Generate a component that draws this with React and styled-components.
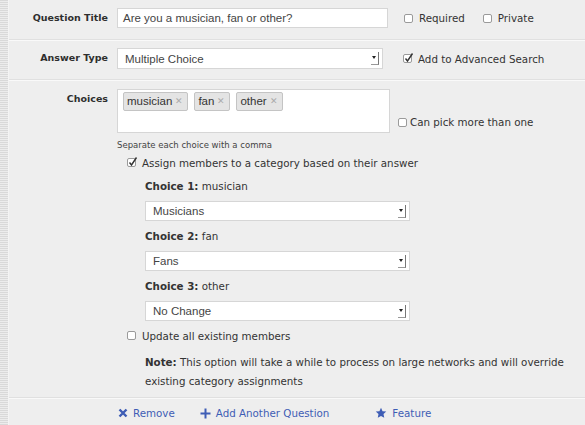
import React from 'react';
import styled, { createGlobalStyle } from 'styled-components';

const GlobalStyle = createGlobalStyle`
  html, body {
    margin: 0;
    padding: 0;
    background: #eeeeee;
  }
  body {
    font-family: "DejaVu Sans", Verdana, sans-serif;
    color: #333;
  }
`;

const Page = styled.div`
  display: flex;
  width: 585px;
  height: 425px;
  overflow: hidden;
`;

const Strip = styled.div`
  width: 8px;
  flex: none;
  background: repeating-linear-gradient(
    to bottom,
    #d9d9d9 0px,
    #d9d9d9 1px,
    #ececec 1px,
    #ececec 2px
  );
  border-right: 1px solid #f4f4f4;
`;

const Content = styled.div`
  flex: 1;
  display: flex;
  flex-direction: column;
`;

const Row = styled.div`
  display: grid;
  grid-template-columns: 99px 1fr;
  align-items: start;
  column-gap: 9px;
  padding: ${(p) => p.$pad || '8px 0 0'};
  height: ${(p) => p.$h};
  box-sizing: border-box;
  border-bottom: 1px solid #e0e0e0;
  box-shadow: 0 1px 0 #f9f9f9;
`;

const Label = styled.div`
  font-weight: bold;
  font-size: 9.5px;
  text-align: right;
  color: #2e2e2e;
  line-height: 20px;
`;

const Line = styled.div`
  display: flex;
  align-items: ${(p) => p.$align || 'center'};
`;

const TextInput = styled.div`
  width: 271px;
  height: 20px;
  box-sizing: border-box;
  background: #fff;
  border: 1px solid #d6d6d6;
  font-family: "Liberation Sans", Arial, sans-serif;
  font-size: 11.5px;
  color: #444;
  line-height: 18px;
  padding-left: 5px;
`;

const Select = styled.div`
  width: ${(p) => p.$w}px;
  height: ${(p) => p.$h || 20}px;
  box-sizing: border-box;
  background: #fff;
  border: 1px solid #d6d6d6;
  font-family: "Liberation Sans", Arial, sans-serif;
  font-size: 11.5px;
  color: #444;
  display: flex;
  align-items: center;
  justify-content: space-between;
  padding: 0 3px 0 7px;
`;

const Arrow = styled.span`
  width: 8px;
  height: 13px;
  box-sizing: border-box;
  border-right: 1px solid #777;
  border-bottom: 1px solid #999;
  position: relative;
  &::after {
    content: '';
    position: absolute;
    left: 1px;
    top: 4px;
    border-left: 2.5px solid transparent;
    border-right: 2.5px solid transparent;
    border-top: 3px solid #222;
  }
`;

const Check = styled.span`
  display: inline-flex;
  align-items: center;
  gap: ${(p) => p.$gap || 6}px;
  font-size: 10.3px;
  color: #333;
  margin-left: ${(p) => p.$ml || 0}px;
  margin-bottom: ${(p) => p.$mb || 0}px;
  white-space: nowrap;
`;

const Box = styled.span`
  width: 9px;
  height: 9px;
  box-sizing: border-box;
  border: 1px solid #9a9a9a;
  border-radius: 2px;
  background: #fff;
  position: relative;
  flex: none;
  svg {
    position: absolute;
    left: 0px;
    top: -3px;
  }
`;

const TagBox = styled.div`
  width: 273px;
  height: 44px;
  box-sizing: border-box;
  background: #fff;
  border: 1px solid #d6d6d6;
  padding: 2px 5px;
  display: flex;
  align-items: flex-start;
  gap: 6px;
`;

const Tag = styled.span`
  height: 19px;
  box-sizing: border-box;
  background: #e4e4e4;
  border: 1px solid #c4c4c4;
  border-radius: 2px;
  font-family: "Liberation Sans", Arial, sans-serif;
  font-size: 11.5px;
  color: #333;
  line-height: 17px;
  padding: 0 4px 0 3px;
  display: inline-flex;
  gap: 3px;
  span {
    color: #aaa;
    font-size: 9px;
  }
`;

const Hint = styled.div`
  font-size: 8.5px;
  color: #444;
  margin-top: 6px;
  line-height: 12px;
`;

const Indent = styled.div`
  padding-left: ${(p) => p.$pl}px;
  margin-top: ${(p) => p.$mt || 0}px;
`;

const ChoiceLabel = styled.div`
  font-size: 10.3px;
  line-height: 14px;
  margin: 8px 0 8px;
  b {
    font-weight: bold;
  }
`;

const Note = styled.div`
  font-size: 10.3px;
  line-height: 19px;
  color: #333;
  b {
    font-weight: bold;
  }
`;

const Footer = styled.div`
  display: flex;
  align-items: center;
  padding: 4px 0 0 109px;
  height: 26px;
  box-sizing: border-box;
`;

const Link = styled.a`
  display: inline-flex;
  align-items: center;
  gap: 5px;
  color: #3e5db5;
  font-size: 10.3px;
  text-decoration: none;
  margin-right: ${(p) => p.$mr}px;
`;

function CheckBox({ checked, label, ml, mb, gap }) {
  return (
    <Check $ml={ml} $mb={mb} $gap={gap}>
      <Box>
        {checked && (
          <svg width="10" height="11" viewBox="0 0 10 11">
            <path d="M1.5 6.5 L3.5 9 L8.5 1.5" fill="none" stroke="#333" strokeWidth="1.4" />
          </svg>
        )}
      </Box>
      {label}
    </Check>
  );
}

function Dropdown({ value, w, h }) {
  return (
    <Select $w={w} $h={h}>
      {value}
      <Arrow />
    </Select>
  );
}

const choices = [
  { n: 1, name: 'musician', cat: 'Musicians' },
  { n: 2, name: 'fan', cat: 'Fans' },
  { n: 3, name: 'other', cat: 'No Change' },
];

export default function App() {
  return (
    <>
      <GlobalStyle />
      <Page>
        <Strip />
        <Content>
          <Row $h="40px">
            <Label>Question Title</Label>
            <Line>
              <TextInput>Are you a musician, fan or other?</TextInput>
              <CheckBox label="Required" ml={16} />
              <CheckBox label="Private" ml={18} />
            </Line>
          </Row>
          <Row $h="40px">
            <Label>Answer Type</Label>
            <Line>
              <Dropdown value="Multiple Choice" w={266} h={21} />
              <CheckBox checked label="Add to Advanced Search" ml={20} />
            </Line>
          </Row>
          <Row $h="318px" $pad="9px 0 0">
            <Label>Choices</Label>
            <div>
              <Line $align="flex-end">
                <TagBox>
                  {['musician', 'fan', 'other'].map((t) => (
                    <Tag key={t}>
                      {t}
                      <span>✕</span>
                    </Tag>
                  ))}
                </TagBox>
                <CheckBox label="Can pick more than one" ml={8} mb={5} gap={3} />
              </Line>
              <Hint>Separate each choice with a comma</Hint>
              <Indent $pl={10} $mt={1}>
                <CheckBox checked label="Assign members to a category based on their answer" />
              </Indent>
              <Indent $pl={28} $mt={5}>
                {choices.map((c) => (
                  <div key={c.n}>
                    <ChoiceLabel>
                      <b>Choice {c.n}:</b> {c.name}
                    </ChoiceLabel>
                    <Dropdown value={c.cat} w={265} />
                  </div>
                ))}
              </Indent>
              <Indent $pl={10} $mt={4}>
                <CheckBox label="Update all existing members" />
              </Indent>
              <Indent $pl={28} $mt={9}>
                <Note>
                  <b>Note:</b> This option will take a while to process on large networks and will override
                  <br />
                  existing category assignments
                </Note>
              </Indent>
            </div>
          </Row>
          <Footer>
            <Link $mr={25}>
              <svg width="10" height="10" viewBox="0 0 10 10">
                <path d="M1.5 1.5 L8.5 8.5 M8.5 1.5 L1.5 8.5" stroke="#3e5db5" strokeWidth="2.4" />
              </svg>
              Remove
            </Link>
            <Link $mr={46}>
              <svg width="11" height="11" viewBox="0 0 11 11">
                <path d="M5.5 0.5 V10.5 M0.5 5.5 H10.5" stroke="#3e5db5" strokeWidth="2" />
              </svg>
              Add Another Question
            </Link>
            <Link $mr={0}>
              <svg width="12" height="12" viewBox="0 0 24 24">
                <path
                  d="M12 1.5 L15.1 8.3 L22.5 9.1 L17 14.1 L18.5 21.5 L12 17.8 L5.5 21.5 L7 14.1 L1.5 9.1 L8.9 8.3 Z"
                  fill="#3e5db5"
                />
              </svg>
              Feature
            </Link>
          </Footer>
        </Content>
      </Page>
    </>
  );
}
